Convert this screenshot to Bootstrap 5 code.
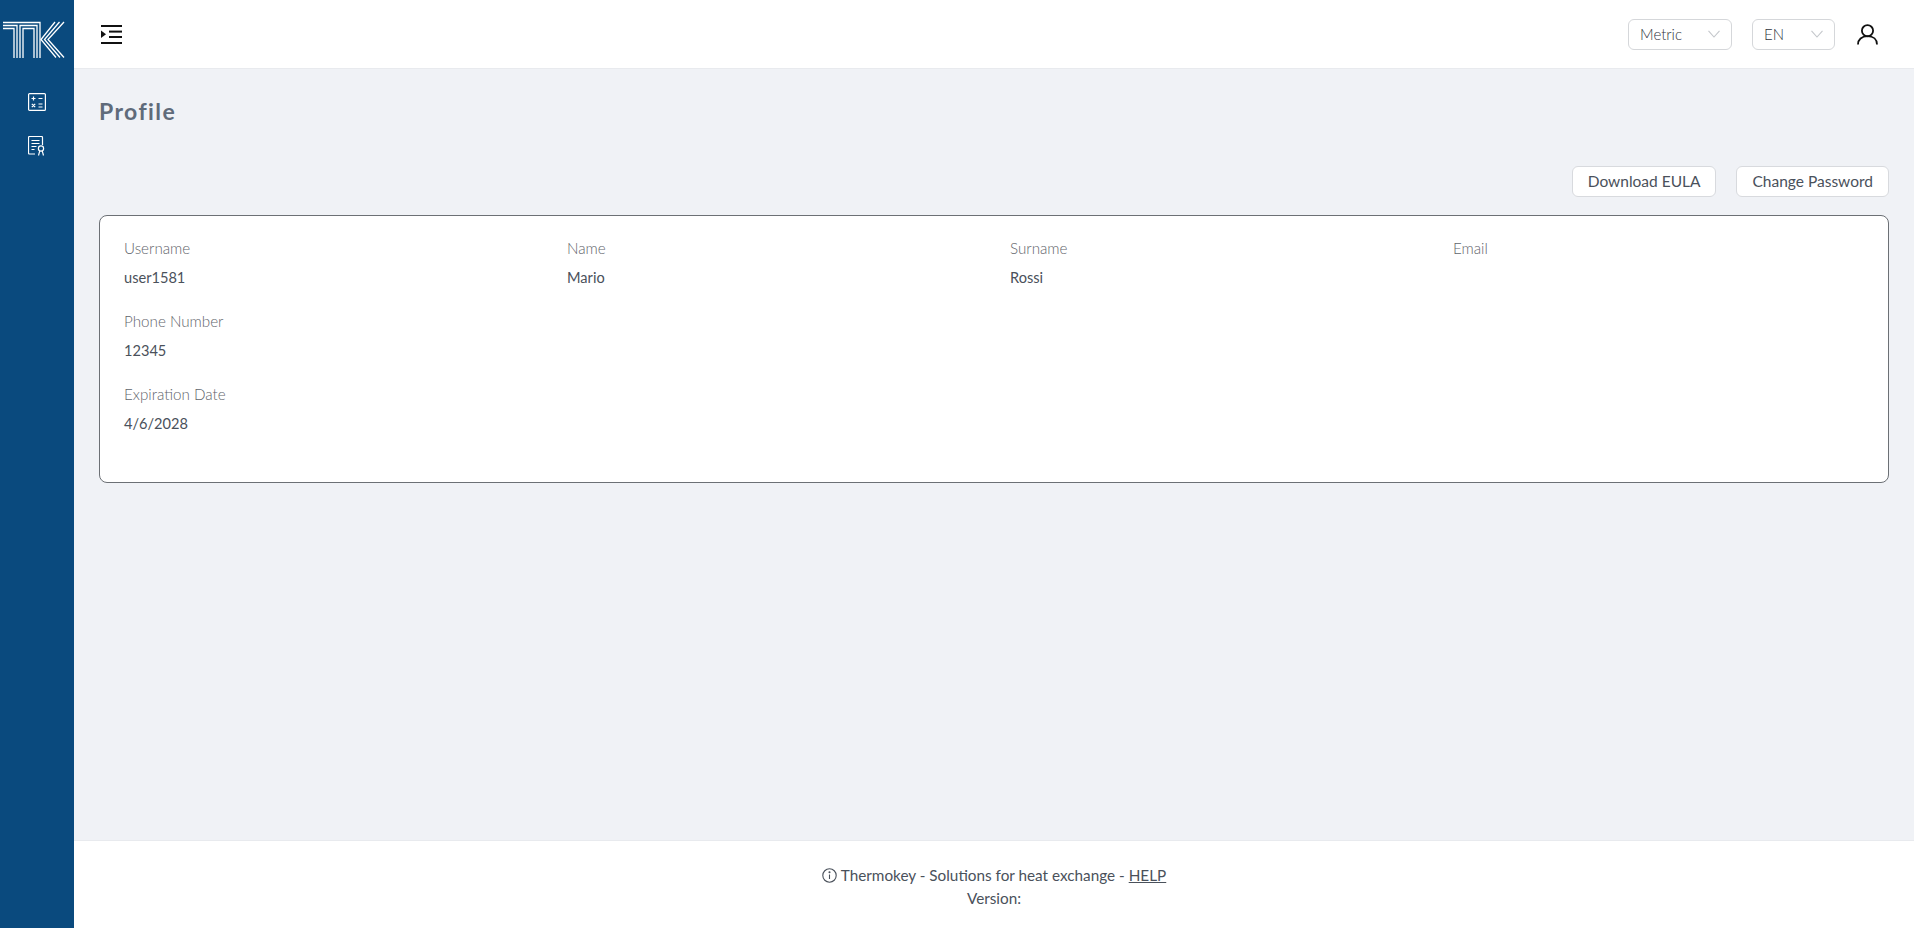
<!DOCTYPE html>
<html lang="en">
<head>
<meta charset="utf-8">
<title>Profile</title>
<link rel="stylesheet" href="https://cdn.jsdelivr.net/npm/bootstrap@5.3.0/dist/css/bootstrap.min.css">
<style>
html,body{height:100%}
body{font-family:"Lato","Noto Sans",sans-serif;font-size:15px;color:#4a515b;background:#f0f2f6;overflow:hidden}
.app-shell{height:928px}
.side-rail{width:74px;background:#0a4a7e;flex:none}
.rail-logo{height:80px;padding-left:3px}
.rail-link{height:44px;color:#fff}
.top-bar{height:69px;background:#fff;border-bottom:1px solid #e8eaee;padding:0 36px 0 27px;flex:none}
.fake-select{height:31px;border:1px solid #d5d7da;border-radius:6px;font-size:15px;font-weight:300;color:#2f353d;padding:0 11px;background:#fff}
.sel-metric{width:104px}
.sel-lang{width:83px;margin-left:20px}
.user-icon{margin-left:22px}
.page-title{font-size:23px;font-weight:700;letter-spacing:1.4px;color:#5f6b7a;margin:0;line-height:28px}
.page-body{padding:28px 25px 0}
.btn-strip{margin-top:41px;margin-bottom:18px;gap:20px}
.ghost-btn{background:#fff;border:1px solid #d8dade;border-radius:6px;color:#4a515b;font-size:15.5px;height:31px;padding:0 15px;line-height:29px}
.info-box{border:1px solid #6c7075;border-radius:8px;background:#fff;height:268px}
.info-box .card-body{padding:21px 16px 0 24px}
.info-label{color:#5f656c;font-size:15.2px;font-weight:300;line-height:22px;margin-bottom:8px}
.info-value{color:#4a515b;font-size:14.6px;line-height:22px;margin-bottom:21px}
.foot-bar{height:88px;background:#fff;border-top:1px solid #e8eaee;font-size:15.3px;line-height:23px;padding-top:23px;color:#4a515b;flex:none}
.foot-bar a{color:#4a515b}
</style>
</head>
<body>
<div class="app-shell d-flex">
  <aside class="side-rail d-flex flex-column">
    <div class="rail-logo d-flex align-items-center justify-content-start">
      <svg width="62" height="38" viewBox="0 0 62 38" fill="none" stroke="#fff" stroke-width="1.3">
        <path d="M0 1.500H37V37M0 4.500H14V37M0 7.500H11V37"/>
        <path d="M17 37V4.500H34V37M20 37V7.500H31V37"/>
        <path d="M61 1L45 18.500L61 36.500M56.500 1L41.500 18.500L57 36.500M52 1L38 18.500L53 36.500"/>
      </svg>
    </div>
    <a class="rail-link d-flex align-items-center justify-content-center" href="#" aria-label="Calculator">
      <svg width="18" height="18" viewBox="0 0 18 18" fill="none" stroke="#fff" stroke-width="1.2">
        <rect x="0.6" y="0.6" width="16.8" height="16.8" rx="1"/>
        <path d="M3.500 5.500h4M5.500 3.500v4M10.500 5.500h4M3.800 10.800l3.400 3.400M7.200 10.800l-3.400 3.400M10.500 11h4M10.500 14h4"/>
      </svg>
    </a>
    <a class="rail-link d-flex align-items-center justify-content-center" href="#" aria-label="Licence">
      <svg width="18" height="20" viewBox="0 0 18 20" fill="none" stroke="#fff" stroke-width="1.2">
        <path d="M7 18H1.500a1 1 0 0 1-1-1V1.500a1 1 0 0 1 1-1h12a1 1 0 0 1 1 1V9"/>
        <path d="M3.500 4.500h8M3.500 7.500h8M3.500 10.500h5M3.500 13.500h3"/>
        <circle cx="13" cy="12.500" r="2.600"/>
        <path d="M10.500 19.500l1.300-4.600M15.500 19.500l-1.300-4.600"/>
      </svg>
    </a>
  </aside>
  <div class="flex-grow-1 d-flex flex-column">
    <header class="top-bar d-flex align-items-center">
      <a href="#" class="d-flex" aria-label="Toggle menu">
        <svg width="21" height="19" viewBox="0 0 21 19" fill="#111">
          <rect x="0" y="0" width="21" height="2"/>
          <rect x="8" y="5.600" width="13" height="2"/>
          <rect x="8" y="11" width="13" height="2"/>
          <rect x="0" y="17" width="21" height="2"/>
          <path d="M0 5.500L5 9.300L0 13z"/>
        </svg>
      </a>
      <div class="ms-auto d-flex align-items-center">
        <div class="fake-select sel-metric d-flex align-items-center justify-content-between">
          <span>Metric</span>
          <svg width="12" height="8" viewBox="0 0 12 8" fill="none" stroke="#c4c7cb" stroke-width="1.1"><path d="M.5.8L6 7l5.500-6.200"/></svg>
        </div>
        <div class="fake-select sel-lang d-flex align-items-center justify-content-between">
          <span>EN</span>
          <svg width="12" height="8" viewBox="0 0 12 8" fill="none" stroke="#c4c7cb" stroke-width="1.1"><path d="M.5.8L6 7l5.500-6.200"/></svg>
        </div>
        <svg class="user-icon" width="21" height="21" viewBox="0 0 21 21" fill="none" stroke="#111" stroke-width="1.8" aria-label="User">
          <circle cx="10.500" cy="6.700" r="5.600"/>
          <path d="M1 20.500c0-5 3.600-8.300 9.500-8.300s9.500 3.300 9.500 8.300"/>
        </svg>
      </div>
    </header>
    <main class="page-body flex-grow-1">
      <h1 class="page-title">Profile</h1>
      <div class="d-flex justify-content-end btn-strip">
        <button type="button" class="ghost-btn">Download EULA</button>
        <button type="button" class="ghost-btn">Change Password</button>
      </div>
      <div class="card info-box">
        <div class="card-body">
          <div class="row">
            <div class="col-3"><div class="info-label">Username</div><div class="info-value">user1581</div></div>
            <div class="col-3"><div class="info-label">Name</div><div class="info-value">Mario</div></div>
            <div class="col-3"><div class="info-label">Surname</div><div class="info-value">Rossi</div></div>
            <div class="col-3"><div class="info-label">Email</div><div class="info-value">&nbsp;</div></div>
            <div class="col-3"><div class="info-label">Phone Number</div><div class="info-value">12345</div></div>
            <div class="w-100"></div>
            <div class="col-3"><div class="info-label">Expiration Date</div><div class="info-value">4/6/2028</div></div>
          </div>
        </div>
      </div>
    </main>
    <footer class="foot-bar text-center">
      <div class="d-flex justify-content-center align-items-center gap-1">
        <svg width="15" height="15" viewBox="0 0 15 15" fill="none" stroke="#4a515b" stroke-width="1.1"><circle cx="7.500" cy="7.500" r="6.700"/><path d="M7.500 6.500v4.500"/><circle cx="7.500" cy="4.300" r=".5" fill="#4a515b"/></svg>
        <span>Thermokey - Solutions for heat exchange - <a href="#">HELP</a></span>
      </div>
      <div>Version:</div>
    </footer>
  </div>
</div>
<script src="https://cdn.jsdelivr.net/npm/bootstrap@5.3.0/dist/js/bootstrap.bundle.min.js"></script>
</body>
</html>
